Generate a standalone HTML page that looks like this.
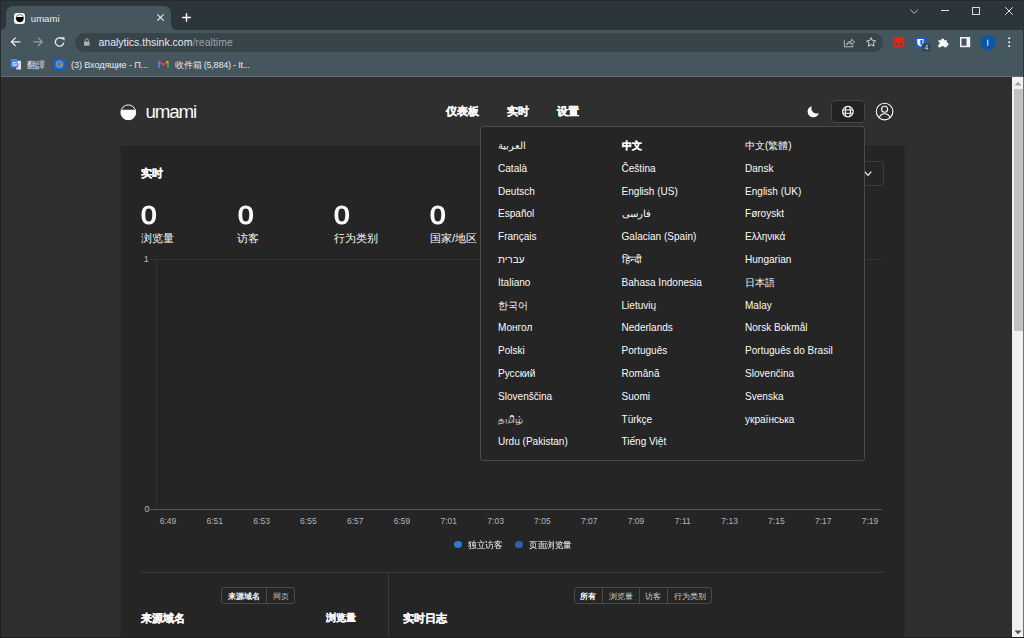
<!DOCTYPE html>
<html><head><meta charset="utf-8"><title>umami</title>
<style>
*{box-sizing:border-box;margin:0;padding:0}
html,body{width:1024px;height:638px;overflow:hidden;background:#2f2f2f;font-family:"Liberation Sans",sans-serif}
.t{position:absolute;white-space:nowrap;line-height:0}
.r{position:absolute}
svg{position:absolute;overflow:visible}
</style></head><body>
<div class="r" style="left:0px;top:0px;width:1024px;height:30px;background:#2b353a;"></div>
<div class="r" style="left:0px;top:0px;width:1024px;height:1px;background:#232a2e;"></div>
<div class="r" style="left:6px;top:6px;width:165px;height:24px;background:#46565e;border-radius:7px 7px 0 0"></div>
<svg style="left:0;top:22px" width="6" height="8"><path d="M0 8 Q6 8 6 2 L6 8 Z" fill="#46565e"/></svg>
<svg style="left:171px;top:22px" width="7" height="8"><path d="M0 1 Q0 8 7 8 L0 8 Z" fill="#46565e"/></svg>
<div class="r" style="left:0px;top:30px;width:1024px;height:46px;background:#46565e;"></div>
<div class="r" style="left:0px;top:76px;width:1024px;height:1px;background:#5d6d75;"></div>
<div class="r" style="left:0px;top:0px;width:1px;height:77px;background:#242b2f;"></div>
<div class="r" style="left:14px;top:12.5px;width:11px;height:11.5px;background:#fafafa;border-radius:3px"></div>
<svg style="left:15px;top:13px" width="10" height="10"><circle cx="4.8" cy="5.2" r="3.7" fill="none" stroke="#444" stroke-width="0.7"/><path d="M1.3 4.1 H8.3 A3.7 3.7 0 1 1 1.3 4.1Z" fill="#000"/></svg>
<div class="t" style="left:30.8px;top:18.97px;font-size:9.6px;color:#e8eaed;">umami</div>
<svg style="left:156.5px;top:14px" width="7" height="7"><path d="M0.3 0.3 L6.7 6.7 M6.7 0.3 L0.3 6.7" stroke="#e8eaed" stroke-width="1.2"/></svg>
<svg style="left:181.5px;top:13px" width="9" height="9"><path d="M4.5 0.2 V8.8 M0.2 4.5 H8.8" stroke="#fff" stroke-width="1.4"/></svg>
<svg style="left:909.5px;top:8.5px" width="9" height="6"><path d="M0.4 0.5 L4.2 4.5 L8 0.5" fill="none" stroke="#b8bec2" stroke-width="1"/></svg>
<div class="r" style="left:941px;top:10px;width:8px;height:1px;background:#e0e3e6;"></div>
<div class="r" style="left:972px;top:7px;width:8px;height:8px;background:none;border:1px solid #d8dcdf"></div>
<svg style="left:1004.5px;top:7px" width="8" height="8"><path d="M0.2 0.2 L7.8 7.8 M7.8 0.2 L0.2 7.8" stroke="#e0e3e6" stroke-width="1"/></svg>
<svg style="left:10px;top:36px" width="12" height="12"><path d="M10.4 5.8 H1.8 M5.6 1.6 L1.4 5.8 L5.6 10" fill="none" stroke="#e8eaed" stroke-width="1.3"/></svg>
<svg style="left:32px;top:36px" width="12" height="12"><path d="M1.2 5.8 H9.8 M6 1.6 L10.2 5.8 L6 10" fill="none" stroke="#939ca1" stroke-width="1.3"/></svg>
<svg style="left:54px;top:36px" width="12" height="12"><path d="M9.7 6.6 A4.2 4.2 0 1 1 8.4 2.9" fill="none" stroke="#e8eaed" stroke-width="1.3"/><path d="M6.9 1.3 L10.5 1.3 L10.5 4.9 Z" fill="#e8eaed"/></svg>
<div class="r" style="left:75px;top:33px;width:808px;height:18.5px;background:#37444a;border-radius:9.5px"></div>
<svg style="left:83px;top:38px" width="8" height="8"><path d="M2.2 3.6 V2.4 A1.6 1.6 0 0 1 5.4 2.4 V3.6" fill="none" stroke="#a9b0b4" stroke-width="1"/><rect x="1" y="3.5" width="5.6" height="4.2" rx="0.6" fill="#a9b0b4"/></svg>
<div class="t" style="left:98.5px;top:42px;font-size:10.5px;color:#e8eaed">analytics.thsink.com<span style="color:#9aa3a8">/realtime</span></div>
<svg style="left:843px;top:38px" width="14" height="10"><path d="M1.3 2.2 V8.8 H10 V7" fill="none" stroke="#bfc5c9" stroke-width="0.9"/><path d="M3.4 6.8 Q4.2 3.4 8.4 3.2 V1.2 L11.6 3.9 L8.4 6.6 V4.8 Q5.4 4.8 3.4 6.8Z" fill="none" stroke="#bfc5c9" stroke-width="0.9" stroke-linejoin="round"/></svg>
<svg style="left:866px;top:37px" width="11" height="10"><path d="M5.2 0.7 L6.5 3.6 L9.7 3.9 L7.3 6 L8 9.2 L5.2 7.6 L2.4 9.2 L3.1 6 L0.7 3.9 L3.9 3.6 Z" fill="none" stroke="#d3d7da" stroke-width="1" stroke-linejoin="round"/></svg>
<svg style="left:893px;top:37px" width="12" height="11"><rect x="0" y="0" width="11" height="10.4" rx="1.8" fill="#e8230f"/><circle cx="3.4" cy="7.3" r="1.75" fill="#3d5056" stroke="#d5341f" stroke-width="0.5"/><circle cx="7.6" cy="7.3" r="1.75" fill="#3d5056" stroke="#d5341f" stroke-width="0.5"/></svg>
<svg style="left:915px;top:37px" width="16" height="15"><rect x="0" y="0" width="10.7" height="10.7" rx="1.5" fill="#175ddc"/><path d="M2.2 2 H8.5 V5.8 Q8.5 8.2 5.35 9.6 Q2.2 8.2 2.2 5.8Z" fill="#fff"/><path d="M5.35 3 H7.5 V5.8 Q7.5 7.6 5.35 8.5Z" fill="#175ddc"/><rect x="7" y="6.4" width="8.6" height="8" rx="1" fill="#2b4654"/><text x="11.3" y="13.3" font-size="7.5" font-family="Liberation Sans" fill="#d8dcdf" text-anchor="middle">4</text></svg>
<svg style="left:937.5px;top:37px" width="12" height="11"><path d="M0.3 3.2 H3 A1.7 1.7 0 0 1 6.4 3.2 H8.8 V5.4 A1.75 1.75 0 0 1 8.8 8.9 V10.3 H6.3 A1.7 1.7 0 0 0 3 10.3 H0.3 V7.9 A1.7 1.7 0 0 0 0.3 4.6Z" fill="#f6f7f8"/></svg>
<svg style="left:960px;top:37px" width="11" height="11"><rect x="0" y="0" width="10.2" height="10.2" fill="#f1f3f4"/><rect x="1.5" y="1.5" width="5" height="7.2" fill="#46565e"/></svg>
<svg style="left:979.5px;top:34.8px" width="17" height="17"><circle cx="7.7" cy="7.6" r="7.6" fill="#0d56a6"/><rect x="7.2" y="4.6" width="1.1" height="6.2" fill="#d6e4f5"/></svg>
<svg style="left:1008px;top:37px" width="3" height="11"><circle cx="1.2" cy="1.3" r="1.05" fill="#eef0f1"/><circle cx="1.2" cy="5.2" r="1.05" fill="#eef0f1"/><circle cx="1.2" cy="9.1" r="1.05" fill="#eef0f1"/></svg>
<svg style="left:10px;top:58px" width="12" height="12"><rect x="6.2" y="2.8" width="4.8" height="8.8" rx="0.6" fill="#e6e8ea"/><path d="M7.3 6 L9.6 6 M8.5 6 Q8.3 8.5 6.8 9.6" stroke="#8a9196" stroke-width="0.7" fill="none"/><path d="M1.4 1 H7 L8.2 9.4 H1.4 Q0.8 9.4 0.8 8.8 V1.6 Q0.8 1 1.4 1Z" fill="#4a86e8"/><path d="M7.6 9.4 L6.5 11.6 L8.2 9.4Z" fill="#3a64c8"/><text x="2.2" y="7.6" font-size="6" font-weight="700" fill="#fff" font-family="Liberation Sans">G</text></svg>
<div class="t" style="left:27px;top:64.88px;font-size:9px;color:#e8eaed;">翻譯</div>
<svg style="left:54px;top:59px" width="11" height="11"><rect width="10.8" height="10.6" rx="0.8" fill="#0b62f0"/><circle cx="5.4" cy="5.3" r="3.4" fill="none" stroke="#f2a81d" stroke-width="0.9"/><circle cx="5.4" cy="5.3" r="1.5" fill="none" stroke="#f2a81d" stroke-width="0.9"/><path d="M6.9 5.3 V6.2 Q7.2 7.3 8.4 6.6" fill="none" stroke="#f2a81d" stroke-width="0.8"/></svg>
<div class="t" style="left:71px;top:64.85px;font-size:9.1px;color:#e8eaed;letter-spacing:-0.1px">(3) Входящие - П...</div>
<svg style="left:158px;top:60px" width="11" height="8"><path d="M0.9 7.8 V1.4 L5.5 4.9 L10.1 1.4 V7.8" fill="none" stroke="#ea4335" stroke-width="1.6" stroke-linejoin="round"/><path d="M0.9 7.8 V1.6" stroke="#4285f4" stroke-width="1.7"/><path d="M10.1 7.8 V1.6" stroke="#34a853" stroke-width="1.7"/><path d="M8.6 2.5 L10.1 1.4" stroke="#fbbc04" stroke-width="1.6"/></svg>
<div class="t" style="left:175px;top:64.88px;font-size:9px;color:#e8eaed;letter-spacing:-0.2px">收件箱 (5,884) - It...</div>
<div class="r" style="left:1px;top:77px;width:1011px;height:560px;background:#2f2f2f;"></div>
<svg style="left:120px;top:103.5px" width="17" height="17"><circle cx="8.3" cy="8.3" r="7.4" fill="none" stroke="#fafafa" stroke-width="1"/><path d="M1.5 5.8 H15.1 A7.4 7.4 0 1 1 1.5 5.8Z" fill="#fafafa"/></svg>
<div class="t" style="left:145.5px;top:111.89px;font-size:18.8px;color:#fafafa;letter-spacing:-1.2px">umami</div>
<div class="t" style="left:446px;top:111.18px;font-size:11.3px;color:#fafafa;font-weight:700;-webkit-text-stroke:0.3px #fafafa">仪表板</div>
<div class="t" style="left:506.5px;top:111.18px;font-size:11.3px;color:#fafafa;font-weight:700;-webkit-text-stroke:0.3px #fafafa">实时</div>
<div class="t" style="left:556.5px;top:111.18px;font-size:11.3px;color:#fafafa;font-weight:700;-webkit-text-stroke:0.3px #fafafa">设置</div>
<svg style="left:806px;top:104px" width="15" height="15"><defs><mask id="mm"><rect width="15" height="15" fill="#fff"/><circle cx="10.6" cy="4.4" r="5.2" fill="#000"/></mask></defs><circle cx="7.3" cy="7.6" r="5.7" fill="#fafafa" mask="url(#mm)"/></svg>
<div class="r" style="left:831px;top:100px;width:34px;height:23px;background:#222222;border:1px solid #464646;border-radius:4px"></div>
<svg style="left:841px;top:105px" width="14" height="14"><circle cx="6.9" cy="6.6" r="5.3" fill="none" stroke="#fafafa" stroke-width="1.2"/><path d="M5 1.6 Q3.6 6.6 5 11.6 M8.8 1.6 Q10.2 6.6 8.8 11.6 M1.8 5 H12 M1.8 8.3 H12" fill="none" stroke="#fafafa" stroke-width="1.1"/></svg>
<svg style="left:875px;top:102px" width="19" height="19"><circle cx="9.6" cy="9.6" r="8.3" fill="none" stroke="#fafafa" stroke-width="1.1"/><circle cx="9.6" cy="7.2" r="3" fill="none" stroke="#fafafa" stroke-width="1.1"/><path d="M4.3 15.8 Q5.5 11.7 9.6 11.7 Q13.7 11.7 14.9 15.8" fill="none" stroke="#fafafa" stroke-width="1.1"/></svg>
<div class="r" style="left:120px;top:145px;width:785px;height:500px;background:#2a2a2a;"></div>
<div class="r" style="left:121px;top:146px;width:783px;height:500px;background:#252525;"></div>
<div class="t" style="left:141px;top:172.88px;font-size:11.3px;color:#fafafa;font-weight:700;-webkit-text-stroke:0.3px #fafafa">实时</div>
<div class="r" style="left:760px;top:161px;width:124px;height:25px;background:#252525;border:1px solid #3e3e3e;border-radius:4px"></div>
<svg style="left:864px;top:171px" width="8" height="6"><path d="M0.7 0.7 L4 4.3 L7.3 0.7" fill="none" stroke="#fafafa" stroke-width="1.2"/></svg>
<div class="t" style="left:141.2px;top:215.34px;font-size:25px;color:#fafafa;transform:scaleX(1.12);transform-origin:0 0;-webkit-text-stroke:1.1px #fafafa">0</div>
<div class="t" style="left:141.0px;top:238.28px;font-size:11.3px;color:#fafafa;">浏览量</div>
<div class="t" style="left:237.5px;top:215.34px;font-size:25px;color:#fafafa;transform:scaleX(1.12);transform-origin:0 0;-webkit-text-stroke:1.1px #fafafa">0</div>
<div class="t" style="left:237.3px;top:238.28px;font-size:11.3px;color:#fafafa;">访客</div>
<div class="t" style="left:333.8px;top:215.34px;font-size:25px;color:#fafafa;transform:scaleX(1.12);transform-origin:0 0;-webkit-text-stroke:1.1px #fafafa">0</div>
<div class="t" style="left:333.6px;top:238.28px;font-size:11.3px;color:#fafafa;">行为类别</div>
<div class="t" style="left:430.09999999999997px;top:215.34px;font-size:25px;color:#fafafa;transform:scaleX(1.12);transform-origin:0 0;-webkit-text-stroke:1.1px #fafafa">0</div>
<div class="t" style="left:429.9px;top:238.28px;font-size:11.3px;color:#fafafa;">国家/地区</div>
<div class="r" style="left:150px;top:259px;width:732px;height:1px;background:#333333;"></div>
<div class="r" style="left:150px;top:509px;width:732px;height:1px;background:#555555;"></div>
<div class="r" style="left:156px;top:259px;width:1px;height:250px;background:#333333;"></div>
<div class="t" style="left:-151.2px;width:300px;text-align:right;top:259.28px;font-size:9px;color:#b9b9b9;">1</div>
<div class="t" style="left:-150.4px;width:300px;text-align:right;top:508.88px;font-size:9px;color:#b9b9b9;">0</div>
<div class="t" style="left:68.0px;width:200px;text-align:center;top:520.85px;font-size:8.5px;color:#b4b4b4;">6:49</div>
<div class="t" style="left:114.80000000000001px;width:200px;text-align:center;top:520.85px;font-size:8.5px;color:#b4b4b4;">6:51</div>
<div class="t" style="left:161.60000000000002px;width:200px;text-align:center;top:520.85px;font-size:8.5px;color:#b4b4b4;">6:53</div>
<div class="t" style="left:208.39999999999998px;width:200px;text-align:center;top:520.85px;font-size:8.5px;color:#b4b4b4;">6:55</div>
<div class="t" style="left:255.2px;width:200px;text-align:center;top:520.85px;font-size:8.5px;color:#b4b4b4;">6:57</div>
<div class="t" style="left:302.0px;width:200px;text-align:center;top:520.85px;font-size:8.5px;color:#b4b4b4;">6:59</div>
<div class="t" style="left:348.79999999999995px;width:200px;text-align:center;top:520.85px;font-size:8.5px;color:#b4b4b4;">7:01</div>
<div class="t" style="left:395.59999999999997px;width:200px;text-align:center;top:520.85px;font-size:8.5px;color:#b4b4b4;">7:03</div>
<div class="t" style="left:442.4px;width:200px;text-align:center;top:520.85px;font-size:8.5px;color:#b4b4b4;">7:05</div>
<div class="t" style="left:489.20000000000005px;width:200px;text-align:center;top:520.85px;font-size:8.5px;color:#b4b4b4;">7:07</div>
<div class="t" style="left:536.0px;width:200px;text-align:center;top:520.85px;font-size:8.5px;color:#b4b4b4;">7:09</div>
<div class="t" style="left:582.8px;width:200px;text-align:center;top:520.85px;font-size:8.5px;color:#b4b4b4;">7:11</div>
<div class="t" style="left:629.5999999999999px;width:200px;text-align:center;top:520.85px;font-size:8.5px;color:#b4b4b4;">7:13</div>
<div class="t" style="left:676.4px;width:200px;text-align:center;top:520.85px;font-size:8.5px;color:#b4b4b4;">7:15</div>
<div class="t" style="left:723.1999999999999px;width:200px;text-align:center;top:520.85px;font-size:8.5px;color:#b4b4b4;">7:17</div>
<div class="t" style="left:770.0px;width:200px;text-align:center;top:520.85px;font-size:8.5px;color:#b4b4b4;">7:19</div>
<div class="r" style="left:454px;top:540.5px;width:7.5px;height:7.5px;border-radius:50%;background:#2a7ad2"></div>
<div class="t" style="left:468px;top:544.85px;font-size:8.5px;color:#fafafa;transform:scaleX(0.96);transform-origin:0 0">独立访客</div>
<div class="r" style="left:515px;top:540.5px;width:7.5px;height:7.5px;border-radius:50%;background:#2a63aa"></div>
<div class="t" style="left:529px;top:544.85px;font-size:8.5px;color:#fafafa;transform:scaleX(0.95);transform-origin:0 0">页面浏览量</div>
<div class="r" style="left:141px;top:572px;width:743px;height:1px;background:#3a3a3a;"></div>
<div class="r" style="left:388px;top:572px;width:1px;height:70px;background:#3a3a3a;"></div>
<div class="r" style="left:221px;top:587px;width:74px;height:17px;background:none;border:1px solid #4a4a4a;border-radius:3px"></div>
<div class="r" style="left:266px;top:587px;width:1px;height:17px;background:#4a4a4a;"></div>
<div class="t" style="left:143.5px;width:200px;text-align:center;top:595.72px;font-size:8.3px;color:#fafafa;font-weight:700;">来源域名</div>
<div class="t" style="left:180.5px;width:200px;text-align:center;top:595.72px;font-size:8.3px;color:#b9b9b9;">网页</div>
<div class="t" style="left:140.5px;top:617.69px;font-size:11px;color:#fafafa;font-weight:700;-webkit-text-stroke:0.3px #fafafa">来源域名</div>
<div class="t" style="left:55.80000000000001px;width:300px;text-align:right;top:618.03px;font-size:10px;color:#fafafa;font-weight:700;-webkit-text-stroke:0.3px #fafafa">浏览量</div>
<div class="t" style="left:403px;top:617.69px;font-size:11px;color:#fafafa;font-weight:700;-webkit-text-stroke:0.3px #fafafa">实时日志</div>
<div class="r" style="left:574px;top:587px;width:138px;height:17px;background:none;border:1px solid #4a4a4a;border-radius:3px"></div>
<div class="r" style="left:602px;top:587px;width:1px;height:17px;background:#4a4a4a;"></div>
<div class="r" style="left:639px;top:587px;width:1px;height:17px;background:#4a4a4a;"></div>
<div class="r" style="left:667px;top:587px;width:1px;height:17px;background:#4a4a4a;"></div>
<div class="t" style="left:488px;width:200px;text-align:center;top:595.72px;font-size:8.3px;color:#fafafa;font-weight:700;">所有</div>
<div class="t" style="left:520.5px;width:200px;text-align:center;top:595.72px;font-size:8.3px;color:#d0d0d0;">浏览量</div>
<div class="t" style="left:553px;width:200px;text-align:center;top:595.72px;font-size:8.3px;color:#d0d0d0;">访客</div>
<div class="t" style="left:589.5px;width:200px;text-align:center;top:595.72px;font-size:8.3px;color:#d0d0d0;">行为类别</div>
<div class="r" style="left:480px;top:126px;width:385px;height:335px;background:#252525;border:1px solid #4a4a4a;border-radius:3px"></div>
<div class="t" style="left:498px;top:146.02px;font-size:10.05px;color:#fafafa;">العربية</div>
<div class="t" style="left:498px;top:168.82px;font-size:10.05px;color:#fafafa;">Català</div>
<div class="t" style="left:498px;top:191.62px;font-size:10.05px;color:#fafafa;">Deutsch</div>
<div class="t" style="left:498px;top:214.42px;font-size:10.05px;color:#fafafa;">Español</div>
<div class="t" style="left:498px;top:237.22px;font-size:10.05px;color:#fafafa;">Français</div>
<div class="t" style="left:498px;top:260.02px;font-size:10.05px;color:#fafafa;">עברית</div>
<div class="t" style="left:498px;top:282.82px;font-size:10.05px;color:#fafafa;">Italiano</div>
<div class="t" style="left:498px;top:305.62px;font-size:10.05px;color:#fafafa;">한국어</div>
<div class="t" style="left:498px;top:328.42px;font-size:10.05px;color:#fafafa;">Монгол</div>
<div class="t" style="left:498px;top:351.22px;font-size:10.05px;color:#fafafa;">Polski</div>
<div class="t" style="left:498px;top:374.02px;font-size:10.05px;color:#fafafa;">Русский</div>
<div class="t" style="left:498px;top:396.82px;font-size:10.05px;color:#fafafa;">Slovenščina</div>
<div class="t" style="left:498px;top:419.62px;font-size:10.05px;color:#fafafa;">தமிழ்</div>
<div class="t" style="left:498px;top:442.42px;font-size:10.05px;color:#fafafa;">Urdu (Pakistan)</div>
<div class="t" style="left:621.5px;top:146.02px;font-size:10.05px;color:#fafafa;font-weight:700;-webkit-text-stroke:0.35px #fafafa">中文</div>
<div class="t" style="left:621.5px;top:168.82px;font-size:10.05px;color:#fafafa;">Čeština</div>
<div class="t" style="left:621.5px;top:191.62px;font-size:10.05px;color:#fafafa;">English (US)</div>
<div class="t" style="left:621.5px;top:214.42px;font-size:10.05px;color:#fafafa;">فارسی</div>
<div class="t" style="left:621.5px;top:237.22px;font-size:10.05px;color:#fafafa;">Galacian (Spain)</div>
<div class="t" style="left:621.5px;top:260.02px;font-size:10.05px;color:#fafafa;">हिन्दी</div>
<div class="t" style="left:621.5px;top:282.82px;font-size:10.05px;color:#fafafa;">Bahasa Indonesia</div>
<div class="t" style="left:621.5px;top:305.62px;font-size:10.05px;color:#fafafa;">Lietuvių</div>
<div class="t" style="left:621.5px;top:328.42px;font-size:10.05px;color:#fafafa;">Nederlands</div>
<div class="t" style="left:621.5px;top:351.22px;font-size:10.05px;color:#fafafa;">Português</div>
<div class="t" style="left:621.5px;top:374.02px;font-size:10.05px;color:#fafafa;">Română</div>
<div class="t" style="left:621.5px;top:396.82px;font-size:10.05px;color:#fafafa;">Suomi</div>
<div class="t" style="left:621.5px;top:419.62px;font-size:10.05px;color:#fafafa;">Türkçe</div>
<div class="t" style="left:621.5px;top:442.42px;font-size:10.05px;color:#fafafa;">Tiếng Việt</div>
<div class="t" style="left:745px;top:146.02px;font-size:10.05px;color:#fafafa;">中文(繁體)</div>
<div class="t" style="left:745px;top:168.82px;font-size:10.05px;color:#fafafa;">Dansk</div>
<div class="t" style="left:745px;top:191.62px;font-size:10.05px;color:#fafafa;">English (UK)</div>
<div class="t" style="left:745px;top:214.42px;font-size:10.05px;color:#fafafa;">Føroyskt</div>
<div class="t" style="left:745px;top:237.22px;font-size:10.05px;color:#fafafa;">Ελληνικά</div>
<div class="t" style="left:745px;top:260.02px;font-size:10.05px;color:#fafafa;">Hungarian</div>
<div class="t" style="left:745px;top:282.82px;font-size:10.05px;color:#fafafa;">日本語</div>
<div class="t" style="left:745px;top:305.62px;font-size:10.05px;color:#fafafa;">Malay</div>
<div class="t" style="left:745px;top:328.42px;font-size:10.05px;color:#fafafa;">Norsk Bokmål</div>
<div class="t" style="left:745px;top:351.22px;font-size:10.05px;color:#fafafa;">Português do Brasil</div>
<div class="t" style="left:745px;top:374.02px;font-size:10.05px;color:#fafafa;">Slovenčina</div>
<div class="t" style="left:745px;top:396.82px;font-size:10.05px;color:#fafafa;">Svenska</div>
<div class="t" style="left:745px;top:419.62px;font-size:10.05px;color:#fafafa;">українська</div>
<div class="r" style="left:1012px;top:77px;width:11px;height:560px;background:#f1f1f1;"></div>
<svg style="left:1014px;top:81px" width="8" height="5"><path d="M0.5 4.5 L4 0.8 L7.5 4.5Z" fill="#a3a3a3"/></svg>
<div class="r" style="left:1014px;top:89px;width:9px;height:242px;background:#c1c1c1;"></div>
<svg style="left:1014px;top:630px" width="8" height="5"><path d="M0.5 0.5 L4 4.2 L7.5 0.5Z" fill="#505050"/></svg>
<div class="r" style="left:0px;top:77px;width:1px;height:561px;background:#1e1e1e;"></div>
<div class="r" style="left:1023px;top:0px;width:1px;height:77px;background:#2a3236;"></div>
<div class="r" style="left:1023px;top:77px;width:1px;height:561px;background:#727272;"></div>
<div class="r" style="left:0px;top:637px;width:1024px;height:1px;background:#1e1e1e;"></div>
</body></html>
